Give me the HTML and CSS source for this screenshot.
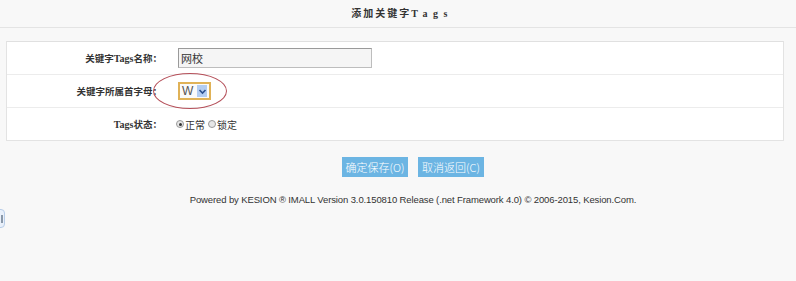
FILE: index.html
```html
<!DOCTYPE html>
<html lang="zh-CN">
<head>
<meta charset="utf-8">
<title>添加关键字Tags</title>
<link rel="stylesheet" href="styles.css">
</head>
<body>
<div class="header">
  <h1 class="title"><span class="title-cjk">添加关键字</span><span class="title-lat">Tags</span></h1>
</div>
<div class="form">
  <div class="row">
    <div class="label">关键字<span class="lat">Tags</span>名称：</div>
    <div class="field"><input class="text-input" type="text" value="网校"></div>
  </div>
  <div class="row">
    <div class="label">关键字所属首字母：</div>
    <div class="field">
      <div class="select">
        <span class="select-value">W</span>
        <span class="select-btn"><svg width="9" height="7" viewBox="0 0 9 7"><path d="M1.5 2 L4.5 5 L7.5 2" fill="none" stroke="#2a4f8f" stroke-width="1.6"/></svg></span>
        <span class="mark"></span>
      </div>
    </div>
  </div>
  <div class="row">
    <div class="label"><span class="lat">Tags</span>状态：</div>
    <div class="field radios">
      <label class="radio"><span class="dot checked"></span>正常</label>
      <label class="radio"><span class="dot"></span>锁定</label>
    </div>
  </div>
</div>
<div class="actions">
  <button class="btn">确定保存(O)</button>
  <button class="btn">取消返回(C)</button>
</div>
<div class="footer">Powered by KESION ® IMALL Version 3.0.150810 Release (.net Framework 4.0) © 2006-2015, Kesion.Com.</div>
<div class="side-tab"><span class="side-tab-bar"></span></div>
</body>
</html>
```
FILE: styles.css
```css
html, body {
  margin: 0;
  padding: 0;
}
body {
  background: #f8f8f8;
  font-family: "Liberation Sans", "Noto Sans CJK SC", sans-serif;
  color: #333;
  position: relative;
  height: 281px;
  overflow: hidden;
}
.header {
  height: 27px;
  border-bottom: 1px solid #e4e4e4;
  text-align: center;
  padding-left: 8px;
}
.title {
  margin: 0;
  font-size: 10px;
  line-height: 27px;
  font-weight: bold;
  color: #333;
  font-family: "Liberation Serif", "Noto Sans CJK SC", serif;
}
.title-cjk {
  letter-spacing: 2px;
}
.title-lat {
  letter-spacing: 5.5px;
}
.form {
  margin: 13px 12px 0 6px;
  background: #fff;
  border: 1px solid #e3e3e3;
  border-top-color: #e0e0e0;
}
.row {
  display: grid;
  grid-template-columns: 155px 1fr;
  column-gap: 16px;
  align-items: center;
  height: 32px;
  border-top: 1px solid #ececec;
}
.row:first-child {
  border-top: none;
}
.label {
  text-align: right;
  font-size: 9.5px;
  font-weight: bold;
  color: #333;
  font-family: "Liberation Serif", "Noto Sans CJK SC", serif;
}
.label .lat {
  font-family: "Liberation Serif", serif;
  font-size: 10px;
}
.field {
  display: flex;
  align-items: center;
}
.text-input {
  box-sizing: border-box;
  width: 194px;
  height: 20px;
  margin: 0;
  padding: 0 2px;
  border: 1px solid #bdbdbd;
  border-top-color: #9a9a9a;
  border-left-color: #9a9a9a;
  background: #f5f5f5;
  font-size: 11px;
  color: #333;
  font-family: "Noto Sans CJK SC", sans-serif;
  outline: none;
}
.select {
  position: relative;
  box-sizing: border-box;
  width: 33px;
  height: 18px;
  border: 2px solid #e0b257;
  background: #fafafa;
  display: flex;
  align-items: center;
  justify-content: space-between;
  padding: 0 2px 0 2px;
}
.select-value {
  font-size: 12px;
  color: #555;
  font-family: "Liberation Sans", sans-serif;
  line-height: 14px;
}
.select-btn {
  width: 10px;
  height: 12px;
  background: #b3cdf2;
  display: flex;
  align-items: center;
  justify-content: center;
}
.select-btn svg {
  display: block;
}
.mark {
  position: absolute;
  left: -27px;
  top: -11px;
  width: 72px;
  height: 34px;
  border: 1px solid #b5505a;
  border-radius: 50%;
  pointer-events: none;
}
.radios {
  gap: 3px;
  margin-left: -2px;
}
.radio {
  display: flex;
  align-items: center;
  gap: 1px;
  font-size: 10px;
  color: #333;
  font-family: "Noto Sans CJK SC", sans-serif;
}
.dot {
  position: relative;
  box-sizing: border-box;
  width: 8px;
  height: 8px;
  border-radius: 50%;
  border: 1px solid #9a9a9a;
  background: #e6e6e6;
}
.dot.checked::after {
  content: "";
  position: absolute;
  left: 1.5px;
  top: 1.5px;
  width: 3px;
  height: 3px;
  border-radius: 50%;
  background: #333;
}
.actions {
  display: flex;
  justify-content: center;
  gap: 10px;
  margin-top: 16px;
  padding-left: 30px;
}
.btn {
  height: 20px;
  width: 66px;
  padding: 0;
  margin: 0;
  border: none;
  background: #6cb5e3;
  color: #fff;
  font-size: 11px;
  font-family: "Noto Sans CJK SC", sans-serif;
  font-weight: 300;
  line-height: 20px;
}
.footer {
  margin-top: 16px;
  padding-left: 30px;
  text-align: center;
  font-size: 9.5px;
  letter-spacing: -0.12px;
  line-height: 14px;
  color: #333;
  font-family: "Liberation Sans", sans-serif;
}
.side-tab {
  position: absolute;
  left: -6px;
  top: 209px;
  width: 9px;
  height: 17px;
  border: 1px solid #b8cde8;
  border-radius: 4px;
  background: #e9f0fa;
  display: flex;
  align-items: center;
  justify-content: flex-end;
}
.side-tab-bar {
  width: 2px;
  height: 8px;
  background: #8a98a8;
  margin-right: 1px;
}
```
